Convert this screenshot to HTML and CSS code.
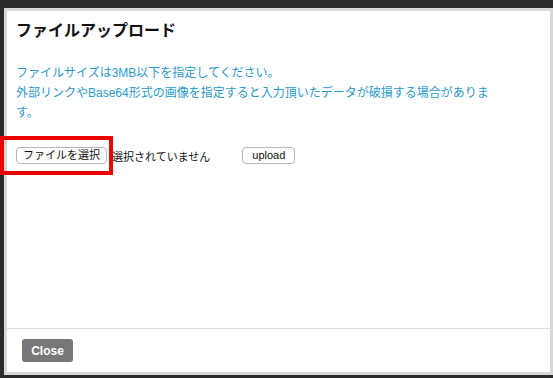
FILE: index.html
```html
<!DOCTYPE html>
<html lang="ja">
<head>
    <meta charset="UTF-8">
    <meta name="viewport" content="width=device-width, initial-scale=1.0">
    <title>ファイルアップロード</title>
    <link rel="stylesheet" href="styles.css">
</head>
<body>

<div id="modal">
    <div class="modal-header">
        <h3>ファイルアップロード</h3>
    </div>
    <div class="modal-body">
        <p class="note">ファイルサイズは3MB以下を指定してください。<br>外部リンクやBase64形式の画像を指定すると入力頂いたデータが破損する場合があります。</p>
        <div class="upload-row">
            <button class="file-btn">ファイルを選択</button>
            <span class="file-name">選択されていません</span>
            <button class="upload-btn">upload</button>
        </div>
    </div>
    <div class="modal-footer">
        <button class="close-btn">Close</button>
    </div>
</div>

<!-- annotation box -->
<div class="highlight"></div>

</body>
</html>
```

FILE: styles.css
```css
body {
    margin: 0;
    height: 378px;
    background-color: #2b2b2b;
    font-family: "Liberation Sans", "Noto Sans CJK JP", sans-serif;
    overflow: hidden;
    position: relative;
}

#modal {
    margin: 8px 0 0 4px;
    width: 543px;
    height: 361px;
    border: 3px solid #d8d8d8;
    background-color: #fff;
    display: flex;
    flex-direction: column;
}

.modal-header {
    padding: 10px 9px 0;
}

.modal-header h3 {
    margin: 0;
    font-size: 16px;
    line-height: 20px;
    font-weight: bold;
    color: #111;
}

.modal-body {
    flex: 1;
    padding: 22px 49px 0 9px;
}

.note {
    margin: 0;
    font-size: 12px;
    line-height: 20px;
    color: #2b9acb;
}

.upload-row {
    display: flex;
    align-items: center;
    margin-top: 24px;
}

button {
    font-family: "Liberation Sans", "Noto Sans CJK JP", sans-serif;
    cursor: pointer;
    white-space: nowrap;
}

.file-btn,
.upload-btn {
    height: 17px;
    padding: 0;
    font-size: 11px;
    line-height: 15px;
    color: #111;
    background-color: #fff;
    border: 1px solid #b5b5b5;
    border-radius: 4px;
}

.file-btn {
    width: 91px;
}

.file-name {
    margin-left: 5px;
    font-size: 11px;
    color: #111;
    white-space: nowrap;
}

.upload-btn {
    margin-left: 32px;
    width: 53px;
}

.modal-footer {
    border-top: 1px solid #dcdcdc;
    padding: 10px 15px 10px;
    height: 23px;
}

.close-btn {
    width: 51px;
    height: 23px;
    padding: 0;
    font-size: 12px;
    font-weight: bold;
    color: #fff;
    background-color: #777;
    border: none;
    border-radius: 3px;
}

.highlight {
    position: absolute;
    left: 0;
    top: 136px;
    width: 105px;
    height: 31px;
    border: 4px solid #ee0000;
}
```
